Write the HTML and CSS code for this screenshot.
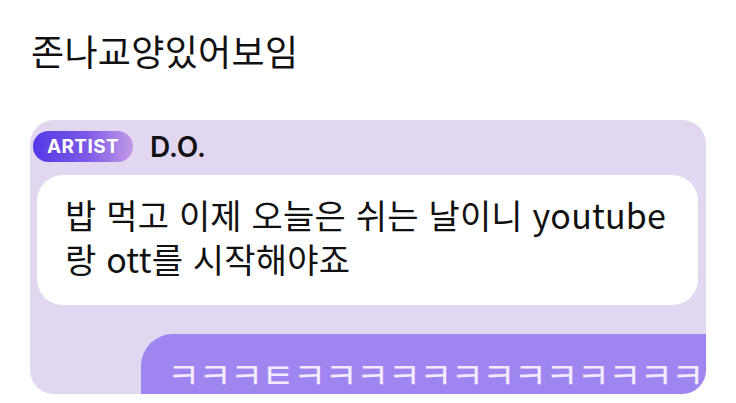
FILE: index.html
```html
<!DOCTYPE html>
<html lang="ko">
  <head>
    <meta charset="UTF-8" />
    <meta name="viewport" content="width=device-width, initial-scale=1.0" />
    <title>존나교양있어보임</title>
    <link rel="stylesheet" href="styles.css">
  </head>
  <body>
    <h1 class="post-title">존나교양있어보임</h1>
    <div class="card">
      <div class="card-header">
        <span class="badge">ARTIST</span>
        <span class="name">D.O.</span>
      </div>
      <div class="bubble">
        <p>밥 먹고 이제 오늘은 쉬는 날이니 youtube<br />랑 ott를 시작해야죠</p>
      </div>
      <div class="reply">
        <p>ㅋㅋㅋㅌㅋㅋㅋㅋㅋㅋㅋㅋㅋㅋㅋㅋㅋ</p>
      </div>
    </div>
  </body>
</html>
```

FILE: styles.css
```css
* {
  box-sizing: border-box;
}

body {
  margin: 0;
  padding: 0;
  background-color: #fff;
  color: #111;
  font-family: "Noto Sans CJK KR", "Noto Sans", sans-serif;
  height: 403px;
  overflow: hidden;
}

.post-title {
  margin: 32px 0 0 31px;
  font-size: 36px;
  font-weight: 400;
  line-height: 36px;
  letter-spacing: 0.3px;
}

.card {
  margin: 52px 30px 0;
  height: 274px;
  background-color: #e1d7f1;
  border-radius: 24px;
  overflow: hidden;
  padding: 11px 8px 0 3px;
}

.card-header {
  display: flex;
  align-items: center;
  gap: 17px;
  height: 31px;
}

.badge {
  display: inline-flex;
  align-items: center;
  justify-content: center;
  width: 100px;
  height: 31px;
  border-radius: 16px;
  background: linear-gradient(90deg, #5438e4 0%, #7d5ae8 55%, #c39ae6 100%);
  color: #fff;
  font-family: Inter, "Liberation Sans", sans-serif;
  font-size: 19px;
  font-weight: 700;
  letter-spacing: 0.4px;
}

.name {
  font-family: Inter, "Liberation Sans", sans-serif;
  font-size: 28px;
  font-weight: 600;
  color: #111;
}

.bubble {
  margin: 13px 0 0 4px;
  height: 130px;
  background-color: #fff;
  border-radius: 26px;
  padding: 18px 20px 0 28px;
}

.bubble p {
  margin: 0;
  font-size: 34px;
  line-height: 44px;
  letter-spacing: 0.2px;
  white-space: nowrap;
}

.reply {
  margin: 29px -8px 0 108px;
  height: 80px;
  background-color: #9f85ef;
  border-radius: 32px 0 0 0;
  padding: 23px 0 0 26px;
}

.reply p {
  margin: 0;
  font-size: 36px;
  line-height: 32px;
  letter-spacing: -1.6px;
  color: #f1ebff;
  white-space: nowrap;
}
```
